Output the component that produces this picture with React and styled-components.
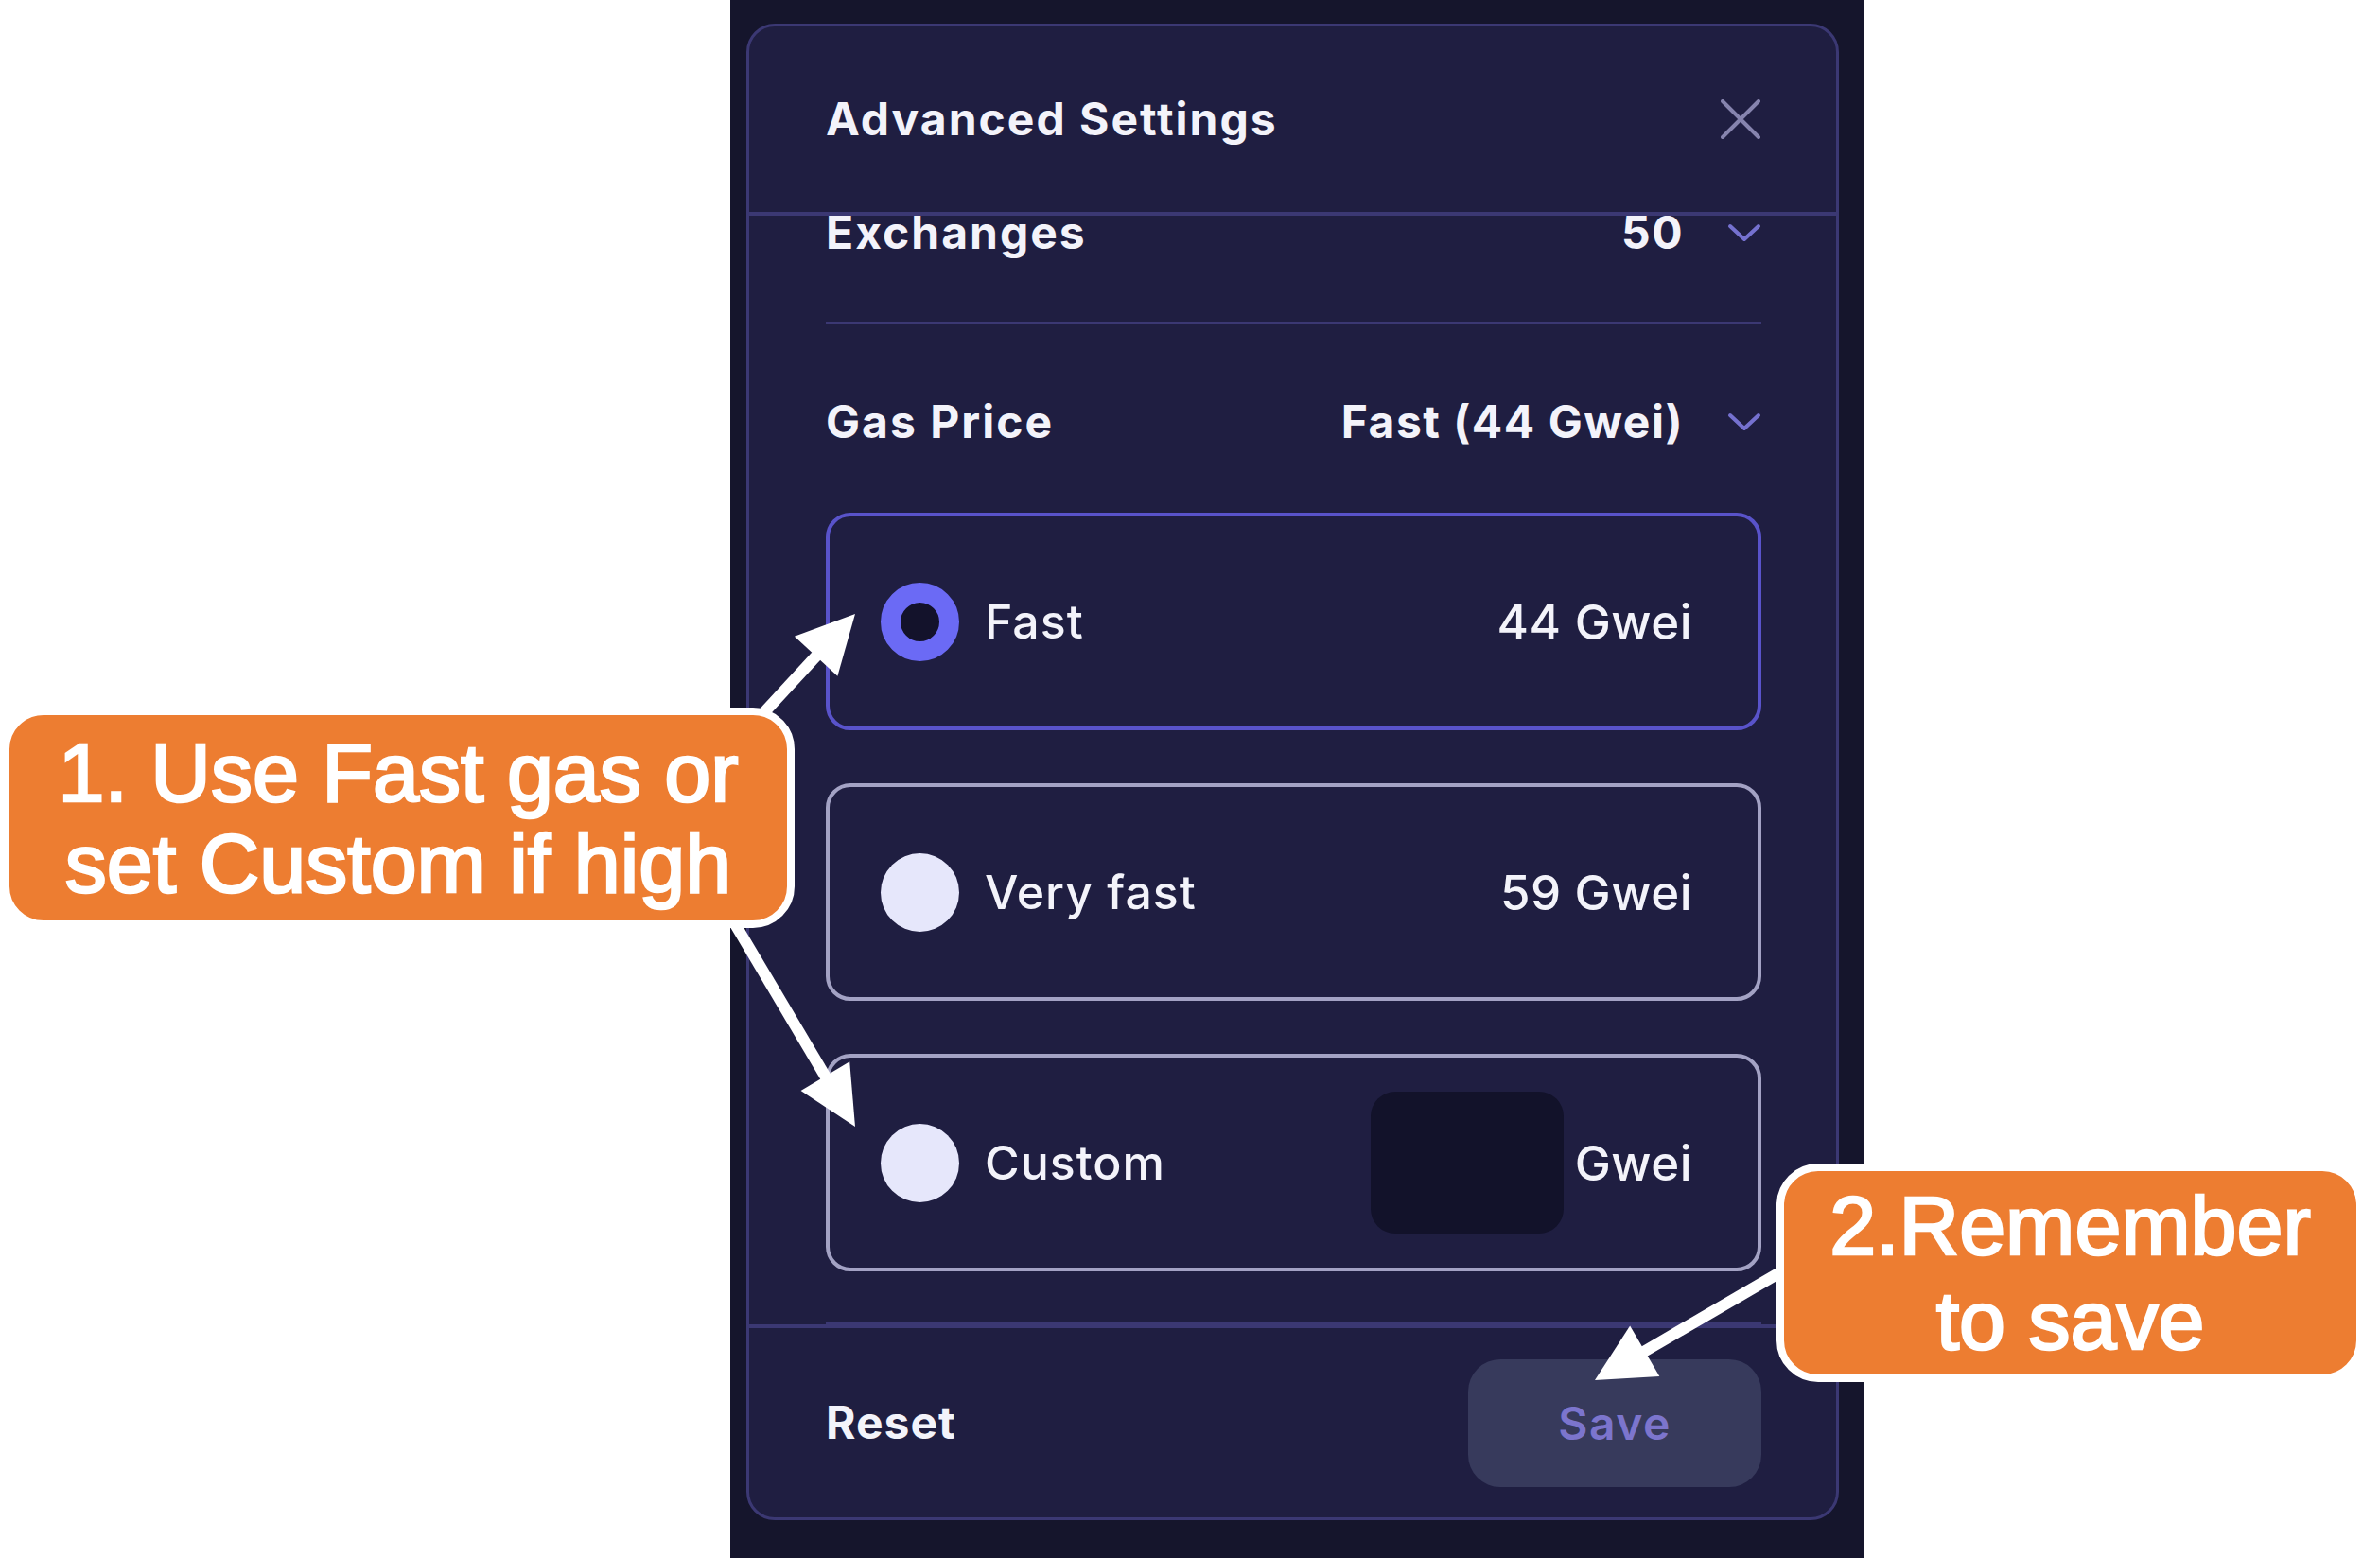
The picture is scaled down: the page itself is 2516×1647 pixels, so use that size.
import React from 'react';
import styled, { createGlobalStyle } from 'styled-components';

const GlobalStyle = createGlobalStyle`
  html, body { margin: 0; padding: 0; background: #ffffff; }
  body { font-family: Inter, "Noto Sans", sans-serif; }
  * { box-sizing: border-box; }
`;

const Page = styled.div`
  position: relative;
  width: 2516px;
  height: 1647px;
  overflow: hidden;
  background: #ffffff;
  display: flex;
`;

const Backdrop = styled.div`
  margin-left: 772px;
  width: 1198px;
  height: 1647px;
  background: #15152c;
  padding: 25px 26px 40px 17px;
`;

const Dialog = styled.section`
  width: 100%;
  height: 100%;
  background: #1f1e41;
  border: 3px solid #3b3873;
  border-radius: 30px;
  display: flex;
  flex-direction: column;
  overflow: hidden;
  color: #f3f3fa;
`;

const Header = styled.header`
  flex-shrink: 0;
  height: 200px;
  padding: 0 81px 0 81px;
  border-bottom: 4px solid #3b3873;
  display: flex;
  align-items: center;
  justify-content: space-between;
`;

const Title = styled.h2`
  margin: 0;
  font-size: 48px;
  line-height: 1;
  font-weight: 650;
  letter-spacing: 2px;
`;

const CloseButton = styled.button`
  width: 44px;
  height: 44px;
  padding: 0;
  margin-right: -2px;
  border: 0;
  background: transparent;
  display: flex;
  align-items: center;
  justify-content: center;
`;

const Scroll = styled.div`
  flex: 1;
  overflow: hidden;
  padding: 0 79px 0 81px;
`;

const ScrollInner = styled.div`
  margin-top: ${(p) => p.$offset}px;
  display: flex;
  flex-direction: column;
`;

const SettingRow = styled.div`
  height: 100px;
  margin-top: ${(p) => p.$gap || 0}px;
  display: flex;
  align-items: center;
  justify-content: space-between;
`;

const RowLabel = styled.span`
  font-size: 48px;
  line-height: 1;
  font-weight: 650;
  letter-spacing: 2px;
`;

const RowValue = styled.span`
  display: flex;
  align-items: center;
  gap: 46px;
  font-size: 48px;
  line-height: 1;
  font-weight: 650;
  letter-spacing: 1.5px;
`;

const Divider = styled.hr`
  margin: ${(p) => p.$gap}px 0 0;
  height: 3px;
  border: 0;
  background: #3b3873;
`;

const OptionList = styled.div`
  margin-top: ${(p) => p.$gap}px;
  display: flex;
  flex-direction: column;
  gap: 56px;
`;

const OptionCard = styled.label`
  height: 230px;
  border: 4px solid ${(p) => (p.$active ? '#5953ca' : '#a3a2c4')};
  border-radius: 26px;
  padding: 0 69px 0 54px;
  display: flex;
  align-items: center;
`;

const Radio = styled.span`
  flex-shrink: 0;
  width: 83px;
  height: 83px;
  border-radius: 50%;
  background: ${(p) => (p.$active ? '#13122b' : '#e6e7fb')};
  border: ${(p) => (p.$active ? '21px solid #6b6af5' : '0')};
`;

const OptionLabel = styled.span`
  flex: 1;
  margin-left: 27px;
  font-size: 50px;
  line-height: 1;
  font-weight: 450;
  letter-spacing: 1px;
`;

const OptionValue = styled.span`
  font-size: 51px;
  line-height: 1;
  font-weight: 450;
  letter-spacing: 0.5px;
`;

const GweiInput = styled.span`
  width: 204px;
  height: 150px;
  border-radius: 26px;
  background: #12122a;
  margin-right: 12px;
`;

const Footer = styled.footer`
  flex-shrink: 0;
  height: 204px;
  border-top: 4px solid #3b3873;
  padding: 0 81px 0 81px;
  display: flex;
  align-items: center;
  justify-content: space-between;
`;

const ResetButton = styled.button`
  padding: 0;
  border: 0;
  background: transparent;
  color: #f3f3fa;
  font-family: inherit;
  font-size: 48px;
  line-height: 1;
  font-weight: 650;
  letter-spacing: 1px;
`;

const SaveButton = styled.button`
  width: 310px;
  height: 135px;
  margin-right: -2px;
  border: 0;
  border-radius: 34px;
  background: #373a5c;
  color: #7c75cd;
  font-family: inherit;
  font-size: 48px;
  font-weight: 600;
  letter-spacing: 1.5px;
`;

const ArrowLayer = styled.svg`
  position: absolute;
  left: 0;
  top: 0;
  width: 2516px;
  height: 1647px;
  pointer-events: none;
`;

const Callout = styled.div`
  position: absolute;
  left: ${(p) => p.$x}px;
  top: ${(p) => p.$y}px;
  width: ${(p) => p.$w}px;
  height: ${(p) => p.$h}px;
  background: #ed7d31;
  border: 8px solid #ffffff;
  border-radius: 44px;
  display: flex;
  flex-direction: column;
  align-items: center;
  justify-content: center;
  color: #ffffff;
  font-family: "Liberation Sans", Arial, sans-serif;
  font-size: 88px;
  line-height: ${(p) => p.$lh}px;
  font-weight: 400;
  -webkit-text-stroke: 2.6px #ffffff;
  text-align: center;
  white-space: nowrap;
`;

function Chevron() {
  return (
    <svg width="36" height="22" viewBox="0 0 36 22" fill="none">
      <path d="M3 4 L18 18 L33 4" stroke="#7571cf" strokeWidth="4" strokeLinecap="round" strokeLinejoin="round" />
    </svg>
  );
}

function CloseIcon() {
  return (
    <svg width="42" height="42" viewBox="0 0 42 42" fill="none">
      <path d="M2 2 L40 40 M40 2 L2 40" stroke="#8684ae" strokeWidth="4" strokeLinecap="round" />
    </svg>
  );
}

function arrowShape(x1, y1, x2, y2, head, half) {
  const dx = x2 - x1;
  const dy = y2 - y1;
  const len = Math.hypot(dx, dy);
  const ux = dx / len;
  const uy = dy / len;
  const bx = x2 - ux * head;
  const by = y2 - uy * head;
  const px = -uy;
  const py = ux;
  return {
    line: { x1, y1, x2: bx + ux * 4, y2: by + uy * 4 },
    head: `${x2},${y2} ${bx + px * half},${by + py * half} ${bx - px * half},${by - py * half}`,
  };
}

const ARROWS = [
  arrowShape(760, 805, 904, 649, 61, 31),
  arrowShape(760, 948, 904, 1191, 62, 30),
  arrowShape(1930, 1317, 1686, 1459, 61, 31),
];

const OPTIONS = [
  { id: 'fast', label: 'Fast', value: '44 Gwei', active: true },
  { id: 'vfast', label: 'Very fast', value: '59 Gwei' },
  { id: 'custom', label: 'Custom', value: 'Gwei', custom: true },
];

export default function App() {
  return (
    <Page>
      <GlobalStyle />
      <Backdrop>
        <Dialog>
          <Header>
            <Title>Advanced Settings</Title>
            <CloseButton aria-label="Close">
              <CloseIcon />
            </CloseButton>
          </Header>
          <Scroll>
            <ScrollInner $offset={-32}>
              <SettingRow>
                <RowLabel>Exchanges</RowLabel>
                <RowValue>
                  50
                  <Chevron />
                </RowValue>
              </SettingRow>
              <Divider $gap={44} />
              <SettingRow $gap={53}>
                <RowLabel>Gas Price</RowLabel>
                <RowValue>
                  Fast (44 Gwei)
                  <Chevron />
                </RowValue>
              </SettingRow>
              <OptionList $gap={46}>
                {OPTIONS.map((o) => (
                  <OptionCard key={o.id} $active={o.active}>
                    <Radio $active={o.active} />
                    <OptionLabel>{o.label}</OptionLabel>
                    {o.custom && <GweiInput />}
                    <OptionValue>{o.value}</OptionValue>
                  </OptionCard>
                ))}
              </OptionList>
              <Divider $gap={54} />
            </ScrollInner>
          </Scroll>
          <Footer>
            <ResetButton>Reset</ResetButton>
            <SaveButton>Save</SaveButton>
          </Footer>
        </Dialog>
      </Backdrop>

      <ArrowLayer viewBox="0 0 2516 1647">
        {ARROWS.map((a, i) => (
          <g key={i}>
            <line {...a.line} stroke="#ffffff" strokeWidth="12" />
            <polygon points={a.head} fill="#ffffff" />
          </g>
        ))}
      </ArrowLayer>

      <Callout $x={2} $y={748} $w={838} $h={233} $lh={96}>
        <span>1. Use Fast gas or</span>
        <span>set Custom if high</span>
      </Callout>
      <Callout $x={1878} $y={1230} $w={621} $h={231} $lh={100}>
        <span>2.Remember</span>
        <span>to save</span>
      </Callout>
    </Page>
  );
}
